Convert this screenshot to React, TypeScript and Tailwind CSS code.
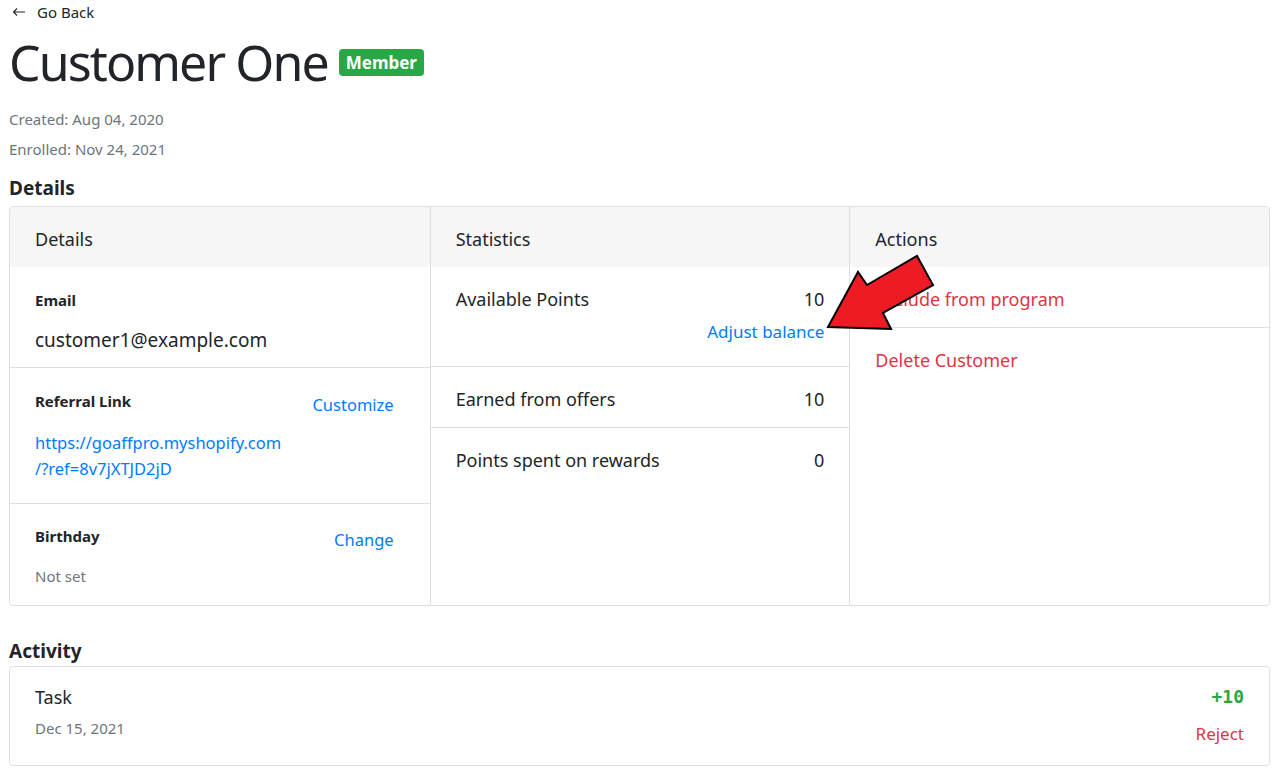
import React from "react";

const font = { fontFamily: '"Noto Sans", "Open Sans", sans-serif' };

export default function App() {
  return (
    <div className="relative min-h-[775px] bg-white pl-[9px] pr-[7px] text-[#212529]" style={font}>
      {/* Go Back */}
      <div className="flex items-center h-[24px] text-[15px] leading-[24px]">
        <svg width="14" height="10" viewBox="0 0 14 10" className="ml-[3px] mr-[11px]" fill="none" stroke="#212529" strokeWidth="1.1">
          <path d="M13 5H1.5M5 1.5L1.5 5L5 8.5" />
        </svg>
        <span>Go Back</span>
      </div>

      {/* Title */}
      <div className="mt-[7px] flex items-center h-[62px]">
        <h1 className="text-[50px] leading-[62px] font-normal tracking-[-1.9px]">Customer One</h1>
        <span className="ml-[11px] mt-[1px] rounded-[4px] bg-[#28a745] px-[7px] h-[27px] text-[17px] font-bold leading-[27px] text-white">Member</span>
      </div>

      <p className="mt-[15px] text-[15px] leading-[22px] text-[#6c757d]">Created: Aug 04, 2020</p>
      <p className="mt-[8px] text-[15px] leading-[22px] text-[#6c757d]">Enrolled: Nov 24, 2021</p>

      <h2 className="mt-[16px] text-[19px] font-bold leading-[24px]">Details</h2>

      {/* Details card */}
      <div className="mt-[6px] grid grid-cols-3 rounded-[4px] border border-[#dfdfdf] overflow-hidden">
        {/* Details column */}
        <div className="flex flex-col">
          <div className="h-[60px] bg-[#f6f6f6] px-[25px] pt-[4px] flex items-center text-[18px]">Details</div>
          <div className="px-[25px] pt-[22px] pb-[13px] border-b border-[#dfdfdf]">
            <div className="text-[15px] font-bold leading-[22px]">Email</div>
            <div className="mt-[15px] text-[19px] leading-[28px]">customer1@example.com</div>
          </div>
          <div className="px-[25px] pt-[22px] pb-[21px] border-b border-[#dfdfdf]">
            <div className="flex justify-between items-start">
              <div className="text-[15px] font-bold leading-[22px]">Referral Link</div>
              <div className="mt-[1px] mr-[11px] text-[16.5px] leading-[28px] text-[#007bff]">Customize</div>
            </div>
            <div className="mt-[11px] text-[16.5px] leading-[26px] text-[#007bff]">
              https://goaffpro.myshopify.com
              <br />/?ref=8v7jXTJD2jD
            </div>
          </div>
          <div className="px-[25px] pt-[21px] pb-[18px]">
            <div className="flex justify-between items-start">
              <div className="text-[15px] font-bold leading-[22px]">Birthday</div>
              <div className="mt-[1px] mr-[11px] text-[16.5px] leading-[28px] text-[#007bff]">Change</div>
            </div>
            <div className="mt-[11px] text-[15px] leading-[22px] text-[#6c757d]">Not set</div>
          </div>
        </div>

        {/* Statistics column */}
        <div className="flex flex-col border-l border-[#dfdfdf]">
          <div className="h-[60px] bg-[#f6f6f6] px-[25px] pt-[4px] flex items-center text-[18px]">Statistics</div>
          <div className="px-[25px] pt-[18px] pb-[22px] border-b border-[#dfdfdf]">
            <div className="flex justify-between text-[18px] leading-[28px]">
              <span>Available Points</span>
              <span>10</span>
            </div>
            <div className="mt-[7px] text-right text-[17px] leading-[24px] text-[#007bff]">Adjust balance</div>
          </div>
          <div className="px-[25px] pt-[18px] pb-[14px] border-b border-[#dfdfdf]">
            <div className="flex justify-between text-[18px] leading-[28px]">
              <span>Earned from offers</span>
              <span>10</span>
            </div>
          </div>
          <div className="px-[25px] pt-[18px] pb-[14px]">
            <div className="flex justify-between text-[18px] leading-[28px]">
              <span>Points spent on rewards</span>
              <span>0</span>
            </div>
          </div>
        </div>

        {/* Actions column */}
        <div className="flex flex-col border-l border-[#dfdfdf]">
          <div className="h-[60px] bg-[#f6f6f6] px-[25px] pt-[4px] flex items-center text-[18px]">Actions</div>
          <div className="px-[25px] pt-[18px] pb-[14px] border-b border-[#dfdfdf] text-[18px] leading-[28px] text-[#dc3545]">
            Exclude from program
          </div>
          <div className="px-[25px] pt-[18px] pb-[14px] text-[18px] leading-[28px] text-[#dc3545]">Delete Customer</div>
        </div>
      </div>

      <h2 className="mt-[33px] text-[19px] font-bold leading-[24px]">Activity</h2>

      <div className="mt-[3px] rounded-[4px] border border-[#dfdfdf] px-[25px] pt-[16px] pb-[19px] flex justify-between">
        <div>
          <div className="text-[18px] leading-[28px]">Task</div>
          <div className="mt-[6px] text-[15px] leading-[22px] text-[#6c757d]">Dec 15, 2021</div>
        </div>
        <div className="flex flex-col items-end">
          <div className="text-[18px] leading-[28px] font-bold text-[#28a745]" style={{ fontFamily: '"DejaVu Sans Mono", "Liberation Mono", monospace' }}>
            +10
          </div>
          <div className="mt-[11px] text-[17px] leading-[24px] text-[#dc3545]">Reject</div>
        </div>
      </div>

      {/* Annotation arrow */}
      <svg className="absolute left-0 top-0 pointer-events-none" width="1277" height="775" viewBox="0 0 1277 775">
        <polygon
          points="828,327 858,272 867,285 917,256 933,285 883,313 891,329"
          fill="#ed1c24"
          stroke="#000"
          strokeWidth="2"
          strokeLinejoin="miter"
        />
      </svg>
    </div>
  );
}
